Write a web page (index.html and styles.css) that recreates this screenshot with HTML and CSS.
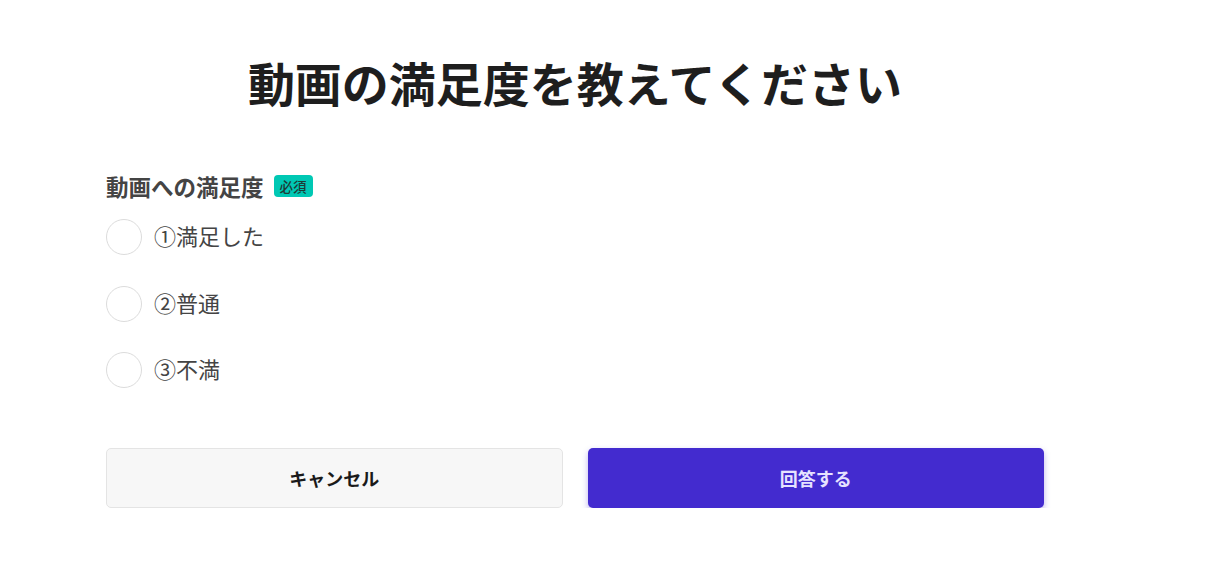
FILE: index.html
```html
<!DOCTYPE html>
<html lang="ja">
<head>
<meta charset="utf-8">
<title>動画の満足度</title>
<link rel="stylesheet" href="styles.css">
</head>
<body>
<main class="page">
  <h1 class="title">動画の満足度を教えてください</h1>
  <section class="question">
    <div class="label-row">
      <span class="label">動画への満足度</span>
      <span class="badge">必須</span>
    </div>
    <ul class="options">
      <li class="option"><span class="radio"></span><span class="option-text">①満足した</span></li>
      <li class="option"><span class="radio"></span><span class="option-text">②普通</span></li>
      <li class="option"><span class="radio"></span><span class="option-text">③不満</span></li>
    </ul>
  </section>
  <div class="actions">
    <button class="btn btn-cancel">キャンセル</button>
    <button class="btn btn-submit">回答する</button>
  </div>
</main>
</body>
</html>
```
FILE: styles.css
```css
* { box-sizing: border-box; }
html, body { margin: 0; padding: 0; background: #fff; }
body {
  font-family: "Noto Sans CJK JP", "Noto Sans", sans-serif;
  color: #444;
}
.page {
  width: 1044px;
  padding: 50px 0 0 106px;
}
.title {
  margin: 0;
  text-align: center;
  font-size: 47px;
  line-height: 64px;
  font-weight: 700;
  color: #1e1e1e;
}
.question {
  margin-top: 58px;
}
.label-row {
  display: flex;
  align-items: center;
  gap: 10px;
  height: 28px;
}
.label {
  font-size: 22.5px;
  font-weight: 700;
  color: #444;
}
.badge {
  background: #00c8b4;
  color: #1e3a36;
  font-size: 13.5px;
  line-height: 22px;
  padding: 0 6px;
  border-radius: 4px;
  font-weight: 500;
}
.options {
  list-style: none;
  margin: 19px 0 0;
  padding: 0;
  display: flex;
  flex-direction: column;
  gap: 30.5px;
}
.option {
  display: flex;
  align-items: center;
  gap: 12px;
  height: 36px;
}
.radio {
  width: 36px;
  height: 36px;
  border-radius: 50%;
  border: 1.5px solid #dcdcdc;
  background: #fff;
  flex: none;
}
.option-text {
  font-size: 22px;
  font-weight: 400;
  color: #444;
  position: relative;
  top: -2px;
}
.actions {
  display: grid;
  grid-template-columns: 1fr 1fr;
  column-gap: 25px;
  margin-top: 60px;
}
.btn {
  height: 60px;
  border-radius: 5px;
  font-family: "Noto Sans CJK JP", "Noto Sans", sans-serif;
  font-size: 18px;
  font-weight: 700;
  cursor: pointer;
  padding: 0;
}
.btn-cancel {
  background: #f7f7f7;
  border: 1px solid #e4e4e4;
  color: #1a1a1a;
}
.btn-submit {
  background: #432bcf;
  border: none;
  color: #e6e2ff;
  box-shadow: 0 3px 6px rgba(67, 43, 207, 0.35);
}
```
